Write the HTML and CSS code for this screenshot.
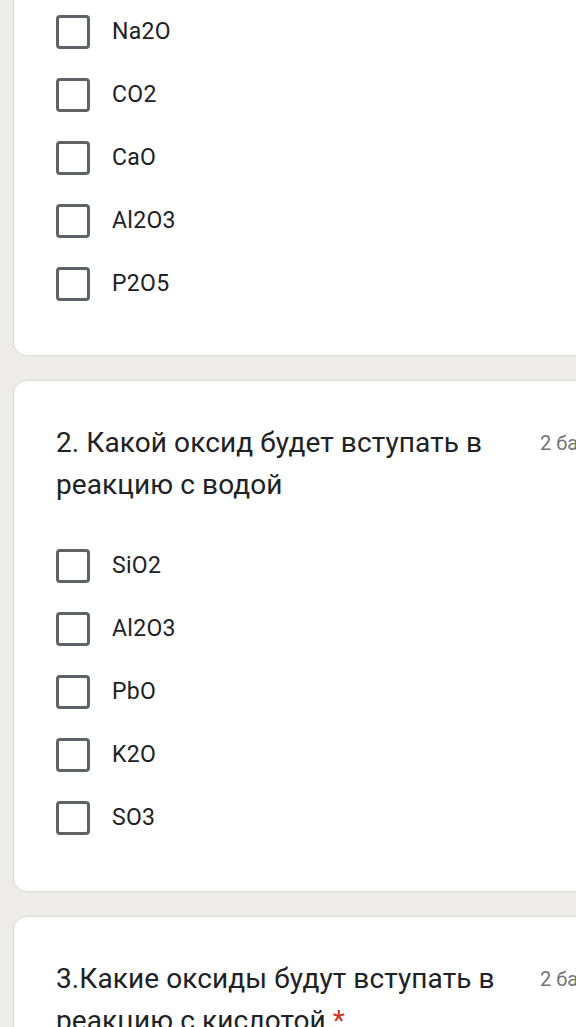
FILE: index.html
```html
<!DOCTYPE html>
<html lang="ru">
<head>
<meta charset="utf-8">
<link rel="stylesheet" href="styles.css">
</head>
<body>
<div class="form">
  <section class="card card-first">
    <ul class="options">
      <li class="option"><span class="box"></span><span class="label">Na2O</span></li>
      <li class="option"><span class="box"></span><span class="label">CO2</span></li>
      <li class="option"><span class="box"></span><span class="label">CaO</span></li>
      <li class="option"><span class="box"></span><span class="label">Al2O3</span></li>
      <li class="option"><span class="box"></span><span class="label">P2O5</span></li>
    </ul>
  </section>
  <section class="card">
    <div class="head">
      <div class="title">2. Какой оксид будет вступать в реакцию с водой</div>
      <div class="points">2 балла</div>
    </div>
    <ul class="options">
      <li class="option"><span class="box"></span><span class="label">SiO2</span></li>
      <li class="option"><span class="box"></span><span class="label">Al2O3</span></li>
      <li class="option"><span class="box"></span><span class="label">PbO</span></li>
      <li class="option"><span class="box"></span><span class="label">K2O</span></li>
      <li class="option"><span class="box"></span><span class="label">SO3</span></li>
    </ul>
  </section>
  <section class="card">
    <div class="head">
      <div class="title">3.Какие оксиды будут вступать в реакцию с кислотой <span class="req">*</span></div>
      <div class="points">2 балла</div>
    </div>
    <ul class="options">
      <li class="option"><span class="box"></span><span class="label">CaO</span></li>
    </ul>
  </section>
</div>
</body>
</html>
```
FILE: styles.css
```css
html, body {
  margin: 0;
  padding: 0;
  background: #eeece9;
  overflow: hidden;
  height: 1027px;
}
body {
  font-family: Roboto, "Noto Sans", Arial, sans-serif;
  color: #202124;
}
.form {
  padding-left: 13px;
  display: flex;
  flex-direction: column;
  gap: 24px;
  width: 700px;
}
.card {
  background: #ffffff;
  border: 1px solid #dcdad6;
  border-radius: 14px;
  padding: 41px 0 42px 42px;
}
.card-first {
  border-top: none;
  border-radius: 0 0 14px 14px;
  padding-top: 0;
  padding-bottom: 40px;
}
.head {
  display: flex;
  align-items: flex-start;
  margin-bottom: 28px;
}
.title {
  flex: 0 0 460px;
  font-size: 28px;
  line-height: 42px;
  letter-spacing: 0.1px;
}
.req {
  color: #d93025;
}
.points {
  margin-left: 24px;
  font-size: 20px;
  line-height: 42px;
  color: #70757a;
  white-space: nowrap;
}
.options {
  list-style: none;
  margin: 0;
  padding: 0;
}
.option {
  display: flex;
  align-items: center;
  height: 63px;
}
.box {
  box-sizing: border-box;
  width: 34px;
  height: 34px;
  border: 3.5px solid #5f6368;
  border-radius: 4px;
  flex: none;
}
.label {
  margin-left: 22px;
  font-size: 23px;
  letter-spacing: 0.3px;
}
```
